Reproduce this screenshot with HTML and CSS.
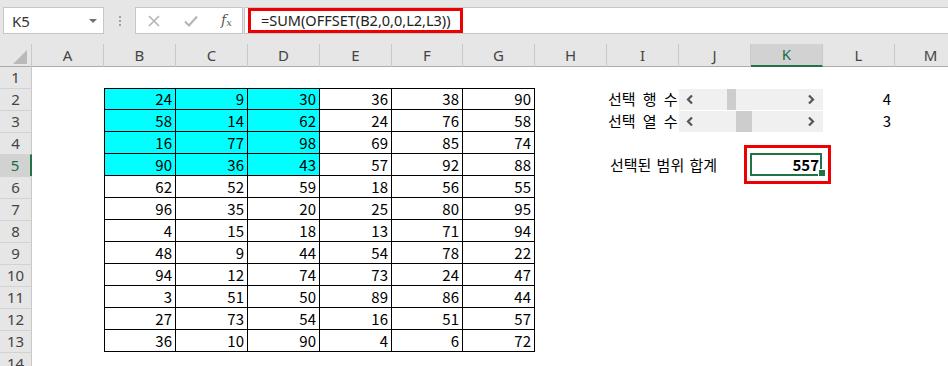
FILE: index.html
```html
<!DOCTYPE html>
<html lang="ko">
<head>
<meta charset="utf-8">
<title>OFFSET</title>
<link rel="stylesheet" href="styles.css">
</head>
<body>
<div class="topbar">
  <div class="namebox"><span class="nb-text">K5</span><span class="nb-caret"></span></div>
  <div class="dots"><i></i><i></i><i></i></div>
  <div class="fxbox">
    <svg class="fx-x" width="12" height="12" viewBox="0 0 12 12"><path d="M1 1 L11 11 M11 1 L1 11" stroke="#b4b4b4" stroke-width="1.6" fill="none"/></svg>
    <svg class="fx-ok" width="14" height="12" viewBox="0 0 14 12"><path d="M1 6.5 L5 10.5 L13 1.5" stroke="#b4b4b4" stroke-width="2" fill="none"/></svg>
    <span class="fx-f">f<sub>x</sub></span>
  </div>
  <div class="formula"><span class="formula-text">=SUM(OFFSET(B2,0,0,L2,L3))</span></div>
</div>

<div class="sheet">
  <div class="row hdr">
    <div class="corner"><span class="tri"></span></div>
    <div class="ch">A</div><div class="ch">B</div><div class="ch">C</div><div class="ch">D</div><div class="ch">E</div><div class="ch">F</div><div class="ch">G</div><div class="ch">H</div><div class="ch">I</div><div class="ch">J</div><div class="ch ch-sel">K</div><div class="ch">L</div><div class="ch">M</div>
  </div>
  <div class="row r1"><div class="rh first">1</div></div>
  <div class="row">
    <div class="rh">2</div>
    <div class="d cb top left hl">24</div><div class="d top hl">9</div><div class="d top hl">30</div><div class="d top">36</div><div class="d top">38</div><div class="d top">90</div>
    <div class="lbl ci">선택 행 수</div>
    <div class="sb cj"><svg class="chev" width="8" height="11" viewBox="0 0 8 11"><path d="M6 1.5 L2 5.5 L6 9.5" stroke="#555" stroke-width="2.2" fill="none"/></svg><div class="track"><span class="thumb" style="margin-left:33px;width:9px"></span></div><svg class="chev" width="8" height="11" viewBox="0 0 8 11"><path d="M2 1.5 L6 5.5 L2 9.5" stroke="#555" stroke-width="2.2" fill="none"/></svg></div>
    <div class="d cl plain">4</div>
  </div>
  <div class="row">
    <div class="rh">3</div>
    <div class="d cb left hl">58</div><div class="d hl">14</div><div class="d hl">62</div><div class="d">24</div><div class="d">76</div><div class="d">58</div>
    <div class="lbl ci">선택 열 수</div>
    <div class="sb cj"><svg class="chev" width="8" height="11" viewBox="0 0 8 11"><path d="M6 1.5 L2 5.5 L6 9.5" stroke="#555" stroke-width="2.2" fill="none"/></svg><div class="track"><span class="thumb" style="margin-left:42px;width:16px"></span></div><svg class="chev" width="8" height="11" viewBox="0 0 8 11"><path d="M2 1.5 L6 5.5 L2 9.5" stroke="#555" stroke-width="2.2" fill="none"/></svg></div>
    <div class="d cl plain">3</div>
  </div>
  <div class="row">
    <div class="rh">4</div>
    <div class="d cb left hl">16</div><div class="d hl">77</div><div class="d hl">98</div><div class="d">69</div><div class="d">85</div><div class="d">74</div>
  </div>
  <div class="row">
    <div class="rh rh-sel">5</div>
    <div class="d cb left hl">90</div><div class="d hl">36</div><div class="d hl">43</div><div class="d">57</div><div class="d">92</div><div class="d">88</div>
    <div class="lbl ci wide">선택된 범위 합계</div>
    <div class="d ck plain active"><span class="sel"></span><span class="handle"></span><span class="mark"></span><b>557</b></div>
  </div>
  <div class="row"><div class="rh">6</div><div class="d cb left">62</div><div class="d">52</div><div class="d">59</div><div class="d">18</div><div class="d">56</div><div class="d">55</div></div>
  <div class="row"><div class="rh">7</div><div class="d cb left">96</div><div class="d">35</div><div class="d">20</div><div class="d">25</div><div class="d">80</div><div class="d">95</div></div>
  <div class="row"><div class="rh">8</div><div class="d cb left">4</div><div class="d">15</div><div class="d">18</div><div class="d">13</div><div class="d">71</div><div class="d">94</div></div>
  <div class="row"><div class="rh">9</div><div class="d cb left">48</div><div class="d">9</div><div class="d">44</div><div class="d">54</div><div class="d">78</div><div class="d">22</div></div>
  <div class="row"><div class="rh">10</div><div class="d cb left">94</div><div class="d">12</div><div class="d">74</div><div class="d">73</div><div class="d">24</div><div class="d">47</div></div>
  <div class="row"><div class="rh">11</div><div class="d cb left">3</div><div class="d">51</div><div class="d">50</div><div class="d">89</div><div class="d">86</div><div class="d">44</div></div>
  <div class="row"><div class="rh">12</div><div class="d cb left">27</div><div class="d">73</div><div class="d">54</div><div class="d">16</div><div class="d">51</div><div class="d">57</div></div>
  <div class="row"><div class="rh">13</div><div class="d cb left">36</div><div class="d">10</div><div class="d">90</div><div class="d">4</div><div class="d">6</div><div class="d">72</div></div>
  <div class="row"><div class="rh">14</div></div>
</div>
</body>
</html>
```

FILE: styles.css
```css
html, body {
  margin: 0;
  padding: 0;
  background: #ffffff;
}
body {
  width: 948px;
  height: 366px;
  overflow: hidden;
  font-family: "Noto Sans CJK KR", "Noto Sans", sans-serif;
}

/* ---------- formula bar ---------- */
.topbar {
  height: 44px;
  box-sizing: border-box;
  background: #e6e6e6;
  display: flex;
  align-items: flex-start;
  padding-top: 7px;
  width: 980px;
}
.namebox {
  margin-left: 3px;
  width: 101px;
  height: 27px;
  box-sizing: border-box;
  background: #fff;
  border: 1px solid #c6c6c6;
  display: flex;
  align-items: center;
  justify-content: space-between;
  padding: 0 6px 0 8px;
}
.nb-text {
  font-family: "Noto Sans", sans-serif;
  font-size: 15px;
  color: #333;
}
.nb-caret {
  width: 0;
  height: 0;
  border-left: 4px solid transparent;
  border-right: 4px solid transparent;
  border-top: 4px solid #707070;
}
.dots {
  width: 31px;
  height: 27px;
  display: flex;
  flex-direction: column;
  align-items: center;
  justify-content: center;
  gap: 2px;
}
.dots i {
  display: block;
  width: 2px;
  height: 2px;
  background: #a0a0a0;
}
.fxbox {
  width: 108px;
  height: 27px;
  box-sizing: border-box;
  background: #fff;
  border: 1px solid #c6c6c6;
  display: flex;
  align-items: center;
  padding-left: 12px;
}
.fx-x { margin-right: 24px; }
.fx-ok { margin-right: 23px; }
.fx-f {
  font-family: "DejaVu Serif", "Liberation Serif", serif;
  font-style: italic;
  font-size: 14px;
  color: #5a5a5a;
  line-height: 1;
}
.fx-f sub {
  font-size: 10px;
  vertical-align: -1px;
}
.formula {
  margin-left: 1px;
  flex: 1;
  height: 27px;
  box-sizing: border-box;
  background: #fff;
  border: 1px solid #c6c6c6;
  border-right: none;
  padding-left: 3px;
  display: flex;
  align-items: stretch;
}
.formula-text {
  width: 215px;
  box-sizing: border-box;
  border: 3px solid #ee0000;
  padding-left: 10px;
  font-family: "Noto Sans", sans-serif;
  font-size: 14.5px;
  line-height: 19px;
  color: #222;
}

/* ---------- sheet ---------- */
.sheet {
  width: 980px;
}
.row {
  display: grid;
  grid-template-columns: 32px repeat(5, 72px) 71px repeat(7, 72px);
  height: 22px;
}
.row.hdr {
  height: 23px;
  background: #e6e6e6;
  border-bottom: 1px solid #ababab;
  box-sizing: border-box;
}
.row.r1 { height: 21px; }
.corner {
  position: relative;
  border-right: 1px solid #c9c9c9;
}
.tri {
  display: block;
  position: absolute;
  right: 4px;
  bottom: 3px;
  width: 0;
  height: 0;
  border-left: 14px solid transparent;
  border-bottom: 14px solid #b9b9b9;
}
.ch {
  box-sizing: border-box;
  border-right: 1px solid #c9c9c9;
  text-align: center;
  font-family: "Noto Sans", sans-serif;
  font-size: 15px;
  line-height: 22px;
  color: #444;
}
.ch-sel {
  background: #d2d2d2;
  border-bottom: 2px solid #217346;
  color: #1f6b43;
  line-height: 21px;
}
.rh {
  grid-column: 1;
  box-sizing: border-box;
  background: #e6e6e6;
  border-top: 1px solid #d2d2d2;
  border-right: 1px solid #c9c9c9;
  text-align: center;
  font-family: "Noto Sans", sans-serif;
  font-size: 15px;
  line-height: 20px;
  color: #444;
}
.rh.first {
  border-top: none;
  line-height: 21px;
}
.rh-sel {
  background: #d2d2d2;
  border-right: 2px solid #217346;
  color: #1f6b43;
}
.d {
  box-sizing: border-box;
  border-right: 1px solid #000;
  border-bottom: 1px solid #000;
  text-align: right;
  padding-right: 3px;
  font-size: 15px;
  line-height: 21px;
  color: #000;
}
.d.top { border-top: 1px solid #000; line-height: 20px; }
.d.left { border-left: 1px solid #000; }
.d.hl { background: #00ffff; }
.cb { grid-column: 3; }
.ci { grid-column: 10; }
.cj { grid-column: 11 / span 2; }
.ck { grid-column: 12; }
.cl { grid-column: 13; }
.d.plain {
  border: none;
  line-height: 22px;
  padding-right: 4px;
}
.lbl {
  font-size: 15px;
  line-height: 22px;
  color: #000;
  padding-left: 1px;
  white-space: pre;
  word-spacing: 3px;
}
.lbl.wide {
  overflow: visible;
  padding-left: 3px;
  word-spacing: 1px;
}
.sb {
  margin-top: 1px;
  height: 21px;
  background: #f0f0f0;
  display: flex;
  align-items: center;
  padding: 0 8px 0 7px;
}
.track {
  flex: 1;
  height: 21px;
  display: flex;
}
.thumb {
  display: block;
  height: 21px;
  background: #cdcdcd;
}
.active {
  position: relative;
  grid-column: 12;
}
.active b {
  position: relative;
  font-weight: 700;
}
.sel {
  position: absolute;
  left: -1px;
  top: -1px;
  right: 1px;
  bottom: 0;
  border: 2px solid #217346;
}
.handle {
  position: absolute;
  right: -3px;
  bottom: -1px;
  width: 6px;
  height: 6px;
  background: #217346;
  border: 1px solid #fff;
}
.mark {
  position: absolute;
  left: -7px;
  top: -9px;
  width: 87px;
  height: 39px;
  box-sizing: border-box;
  border: 3px solid #ee0000;
}
```
